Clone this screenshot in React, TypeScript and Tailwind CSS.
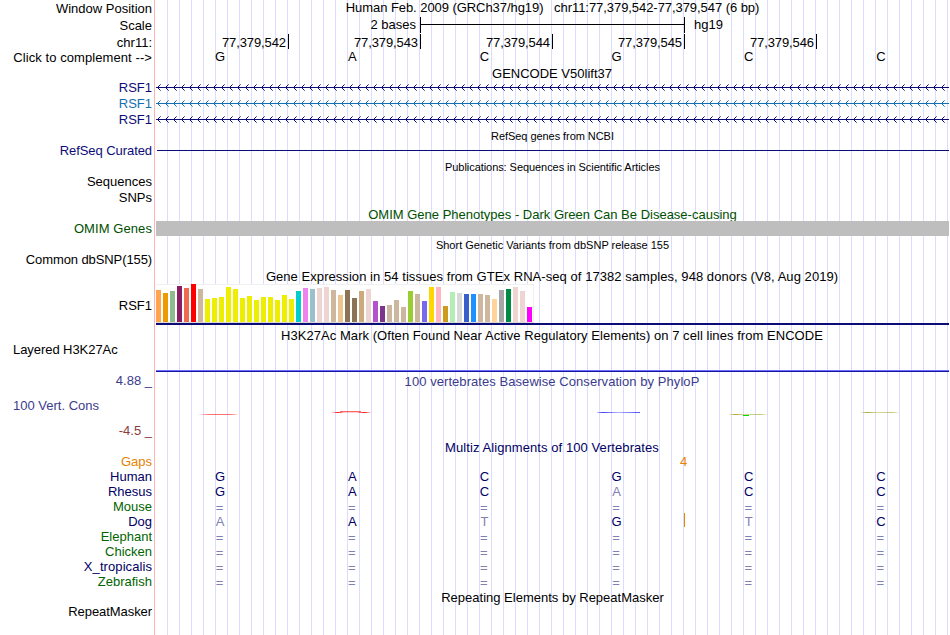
import type { ReactNode } from "react"
import clsx from "clsx"

// GTEx tissues: [color, bar height in px]
const tissues: [string, number][] = [
  ["#ffa54f", 32], ["#ee9a00", 29], ["#8fbc8f", 31], ["#8b1c62", 36], ["#ee6a50", 34], ["#ff0000", 38],
  ["#cdb79e", 33], ["#eeee00", 23], ["#eeee00", 24], ["#eeee00", 25], ["#eeee00", 35], ["#eeee00", 33],
  ["#eeee00", 24], ["#eeee00", 26], ["#eeee00", 22], ["#eeee00", 25], ["#eeee00", 25], ["#eeee00", 22],
  ["#eeee00", 27], ["#eeee00", 23], ["#00cdcd", 31], ["#ee82ee", 34], ["#9ac0cd", 33], ["#eed5d2", 34],
  ["#eed5d2", 35], ["#cdb79e", 32], ["#eec591", 27], ["#8b7355", 32], ["#8b7355", 24], ["#cdaa7d", 31],
  ["#eed5d2", 33], ["#b452cd", 21], ["#7a378b", 16], ["#cdb79e", 17], ["#cdb79e", 22], ["#cdb79e", 15],
  ["#9acd32", 31], ["#cdb79e", 28], ["#7a67ee", 21], ["#ffd700", 35], ["#ffb6c1", 35], ["#cd9b1d", 16],
  ["#b4eeb4", 30], ["#d9d9d9", 29], ["#3a5fcd", 28], ["#1e90ff", 28], ["#cdb79e", 28], ["#cdb79e", 27],
  ["#ffd39b", 23], ["#a6a6a6", 32], ["#008b45", 33], ["#eed5d2", 35], ["#eed5d2", 31], ["#ff00ff", 15],
]

// lower case = mismatch against human, drawn faded
const species = [
  { name: "Human", color: "text-[#000064]", bases: "GACGCC" },
  { name: "Rhesus", color: "text-[#000064]", bases: "GACaCC" },
  { name: "Mouse", color: "text-[#006400]", bases: "======" },
  { name: "Dog", color: "text-[#000064]", bases: "aAtGtC", insert: true },
  { name: "Elephant", color: "text-[#006400]", bases: "======" },
  { name: "Chicken", color: "text-[#006400]", bases: "======" },
  { name: "X_tropicalis", color: "text-[#000064] tracking-[0.08px]", bases: "======" },
  { name: "Zebrafish", color: "text-[#006400]", bases: "======" },
]

const positions = ["77,379,542", "77,379,543", "77,379,544", "77,379,545", "77,379,546"]

function Row({ h, label, labelClass, children }: { h: string; label?: ReactNode; labelClass?: string; children?: ReactNode }) {
  return (
    <div className={clsx("flex items-start", h)}>
      <div className={clsx("w-[156px] shrink-0 pr-[4px] text-right", labelClass)}>{label}</div>
      <div className="relative h-full w-[793px] shrink-0">{children}</div>
    </div>
  )
}

function Title({ className, children }: { className?: string; children: ReactNode }) {
  return <div className={clsx("h-full text-center", className)}>{children}</div>
}

function Gene({ color, id }: { color: string; id: string }) {
  return (
    <svg width="793" height="16" className="block" shapeRendering="crispEdges">
      <defs>
        <pattern id={id} width="8" height="16" patternUnits="userSpaceOnUse">
          <path d="M2 6h1v1h-1z M3 5h1v1h-1z M2 8h1v1h-1z M3 9h1v1h-1z" fill={color} />
          <path d="M4 4h1v1h-1z M4 10h1v1h-1z" fill={color} opacity="0.6" />
        </pattern>
      </defs>
      <rect width="793" height="16" fill={`url(#${id})`} />
      <rect y="7" width="793" height="1" fill={color} />
    </svg>
  )
}

function Bases({ bases, className }: { bases: string; className?: string }) {
  return (
    <div className={clsx("grid grid-cols-6 text-center", className)}>
      {bases.split("").map((b, i) => (
        <span key={i} className={b === "=" ? "relative top-px pr-[5px] text-[#8080b2]" : clsx("pr-[4px]", b !== b.toUpperCase() && "text-[#8080b2]")}>
          {b.toUpperCase()}
        </span>
      ))}
    </div>
  )
}

function Conservation() {
  return (
    <svg width="793" height="52" className="block" shapeRendering="crispEdges">
      <defs>
        <linearGradient id="red">
          <stop offset="0" stopColor="#ff0000" stopOpacity="0" />
          <stop offset="0.25" stopColor="#ff0000" stopOpacity="0.55" />
          <stop offset="0.8" stopColor="#ff0000" stopOpacity="0.55" />
          <stop offset="1" stopColor="#ff0000" stopOpacity="0" />
        </linearGradient>
        <linearGradient id="olive">
          <stop offset="0" stopColor="#969600" stopOpacity="0.1" />
          <stop offset="0.15" stopColor="#969600" stopOpacity="0.8" />
          <stop offset="0.4" stopColor="#969600" stopOpacity="0.35" />
          <stop offset="0.8" stopColor="#969600" stopOpacity="0.55" />
          <stop offset="1" stopColor="#969600" stopOpacity="0" />
        </linearGradient>
        <linearGradient id="blue">
          <stop offset="0" stopColor="#0000ff" stopOpacity="0.2" />
          <stop offset="0.12" stopColor="#0000ff" stopOpacity="0.75" />
          <stop offset="0.5" stopColor="#0000ff" stopOpacity="0.3" />
          <stop offset="1" stopColor="#0000ff" stopOpacity="0.7" />
        </linearGradient>
        <linearGradient id="leftFade">
          <stop offset="0" stopColor="#ff0000" stopOpacity="0.1" />
          <stop offset="0.5" stopColor="#ff0000" stopOpacity="0.9" />
          <stop offset="1" stopColor="#ff0000" stopOpacity="0.4" />
        </linearGradient>
        <linearGradient id="rightFade">
          <stop offset="0" stopColor="#ff0000" stopOpacity="0.4" />
          <stop offset="0.5" stopColor="#ff0000" stopOpacity="0.9" />
          <stop offset="1" stopColor="#ff0000" stopOpacity="0.1" />
        </linearGradient>
      </defs>
      <rect x="42" y="26" width="41" height="1" fill="url(#red)" />
      <rect x="176" y="24" width="11" height="1" fill="url(#leftFade)" />
      <rect x="184" y="23" width="21" height="1" fill="#ff0000" opacity="0.6" />
      <rect x="187" y="24" width="15" height="1" fill="#ff0000" opacity="0.2" />
      <rect x="202" y="24" width="13" height="1" fill="url(#rightFade)" />
      <rect x="441" y="24" width="43" height="1" fill="url(#blue)" />
      <rect x="573" y="26" width="39" height="1" fill="url(#olive)" />
      <rect x="587" y="27" width="6" height="1" fill="#00dc00" />
      <rect x="705" y="24" width="39" height="1" fill="url(#olive)" />
    </svg>
  )
}

export default function App() {
  return (
    <div className="relative h-[635px] w-[950px] overflow-hidden bg-white font-['Liberation_Sans',Arial,sans-serif] text-[13px] leading-4 whitespace-pre text-black">
      {/* guidelines */}
      <div className="absolute inset-y-0 left-[154px] w-px bg-[#ffb4b4]" />
      <div className="absolute inset-y-0 left-[156px] w-[793px] bg-[repeating-linear-gradient(to_right,transparent_0px,transparent_11px,#dcdcff_11px,#dcdcff_12px)]" />

      <div className="relative">
        <Row h="h-[17px]" label="Window Position" labelClass="pt-px">
          <Title className="tracking-[-0.06px]">Human Feb. 2009 (GRCh37/hg19)   chr11:77,379,542-77,379,547 (6 bp)</Title>
        </Row>
        <Row h="h-[16px]" label="Scale" labelClass="pt-px">
          <div className="flex h-full">
            <span className="w-[264px] pr-[4px] text-right">2 bases</span>
            <div className="w-[265px] border-x border-black pt-[7px]">
              <div className="h-px w-full bg-black" />
            </div>
            <span className="pl-[9px]">hg19</span>
          </div>
        </Row>
        <Row h="h-[16px]" label="chr11:" labelClass="pt-[2px]">
          <div className="flex h-full pt-px pl-px">
            {positions.map(p => (
              <div key={p} className="h-[15px] w-[132px] border-r border-black pt-px pr-[2px] text-right tracking-[-0.1px]">{p}</div>
            ))}
          </div>
        </Row>
        <Row h="h-[17px]" label="Click to complement -->" labelClass="pt-px tracking-[0.08px]">
          <Bases bases="GACGCC" />
        </Row>

        <Row h="h-[14px]"><Title className="pr-px">GENCODE V50lift37</Title></Row>
        <Row h="h-[16px]" label="RSF1" labelClass="text-[#0c0c78]"><Gene id="g1" color="#0c0c78" /></Row>
        <Row h="h-[16px]" label="RSF1" labelClass="text-[#1470b0]"><Gene id="g2" color="#1470b0" /></Row>
        <Row h="h-[16px]" label="RSF1" labelClass="text-[#0c0c78]"><Gene id="g3" color="#0c0c78" /></Row>

        <Row h="h-[15px]"><Title className="text-[11px] leading-4 tracking-[-0.06px]">RefSeq genes from NCBI</Title></Row>
        <Row h="h-[16px]" label="RefSeq Curated" labelClass="text-[#0c0c78] tracking-[-0.07px]">
          <div className="pt-[7px] pl-px"><div className="h-px bg-[#0c0c78]" /></div>
        </Row>

        <Row h="h-[15px]"><Title className="text-[11px] leading-4 tracking-[-0.06px]">Publications: Sequences in Scientific Articles</Title></Row>
        <Row h="h-[16px]" label="Sequences" />
        <Row h="h-[17px]" label="SNPs" />

        <Row h="h-[14px]"><Title className="overflow-hidden text-[#005000]">OMIM Gene Phenotypes - Dark Green Can Be Disease-causing</Title></Row>
        <Row h="h-[15px]" label="OMIM Genes" labelClass="text-[#005000] tracking-[0.08px]">
          <div className="h-full bg-[#bebebe]" />
        </Row>

        <Row h="h-[16px]"><Title className="pt-px text-[11px] leading-4">Short Genetic Variants from dbSNP release 155</Title></Row>
        <Row h="h-[16px]" label="Common dbSNP(155)" labelClass="tracking-[-0.1px]" />

        <Row h="h-[16px]"><Title className="pt-px pr-px tracking-[0.055px]">Gene Expression in 54 tissues from GTEx RNA-seq of 17382 samples, 948 donors (V8, Aug 2019)</Title></Row>
        <Row h="h-[41px]" label="RSF1" labelClass="pt-[14px]">
          <div className="flex h-[39px] w-[378px] items-end gap-[2px] border-t border-r border-b border-t-[#f0f0f0] border-r-[#f0f0f0] border-b-[#d8d8d8] bg-white">
            {tissues.map(([color, height], i) => (
              <div key={i} className="w-[5px] shrink-0" style={{ background: color, height }} />
            ))}
          </div>
          <div className="h-[2px] bg-[#0c0c78]" />
        </Row>

        <Row h="h-[17px]"><Title className="pt-[3px] pr-px tracking-[0.05px]">H3K27Ac Mark (Often Found Near Active Regulatory Elements) on 7 cell lines from ENCODE</Title></Row>
        <Row h="h-[30px]" label="Layered H3K27Ac" labelClass="pl-[13px] text-left! tracking-[-0.06px]">
          <div className="flex h-full flex-col justify-end">
            <div className="h-px bg-[#6e6eff]" />
            <div className="h-px bg-[#1414a0]" />
          </div>
        </Row>

        <Row h="h-[16px]" label="4.88 _" labelClass="pt-px text-[#3c3c8c]">
          <Title className="pt-[2px] pr-px tracking-[0.06px] text-[#3c3c8c]">100 vertebrates Basewise Conservation by PhyloP</Title>
        </Row>
        <Row
          h="h-[52px]"
          labelClass="pt-[10px]"
          label={
            <>
              <div className="pl-[13px] text-left text-[#3c3c8c]">100 Vert. Cons</div>
              <div className="pt-[9px] text-[#8c3c3c]">-4.5 _</div>
            </>
          }
        >
          <Conservation />
        </Row>

        <Row h="h-[14px]"><Title className="pr-px tracking-[0.08px] text-[#000064]">Multiz Alignments of 100 Vertebrates</Title></Row>
        <Row h="h-[15px]" label="Gaps" labelClass="text-[#e68200]">
          <div className="pl-[524px] text-[#e68200]">4</div>
        </Row>
        {species.map(s => (
          <Row key={s.name} h="h-[15px]" label={s.name} labelClass={s.color}>
            <Bases bases={s.bases} className="text-[#000064]" />
            {s.insert && <div className="absolute -top-px left-[528px] h-[14px] w-px bg-[#e68200]" />}
          </Row>
        ))}

        <Row h="h-[15px]"><Title className="pt-px">Repeating Elements by RepeatMasker</Title></Row>
        <Row h="h-[31px]" label="RepeatMasker" labelClass="tracking-[-0.07px]" />
      </div>
    </div>
  )
}
